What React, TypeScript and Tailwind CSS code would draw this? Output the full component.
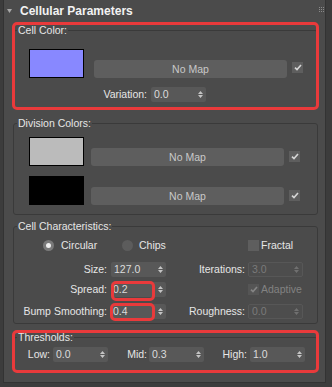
import React from "react";
import { clsx } from "clsx";

/* ── small widgets ─────────────────────────────────────────────── */

const Arrows = ({ dim }: { dim?: boolean }) => (
  <svg width="5" height="7" viewBox="0 0 5 7" className="shrink-0">
    <path d="M2.5 0L5 3H0Z M0 4H5L2.5 7Z" fill={dim ? "#707070" : "#c4c4c4"} />
  </svg>
);

function Spinner({
  value,
  disabled,
  scrolled,
}: {
  value: string;
  disabled?: boolean;
  scrolled?: boolean;
}) {
  return (
    <div
      className={clsx(
        "flex h-[15px] w-[55px] shrink-0 items-center justify-between rounded-[2px] pr-[3px] text-[10.5px] leading-none",
        scrolled ? "pl-[2px]" : "pl-[3px]",
        disabled
          ? "border border-[#575757] bg-[#4d4d4d] text-[#7a7a7a]"
          : "bg-[#585858] text-[#dcdcdc]"
      )}
    >
      <span>{value}</span>
      <Arrows dim={disabled} />
    </div>
  );
}

function Check({ checked, dim }: { checked?: boolean; dim?: boolean }) {
  return (
    <div
      className={clsx(
        "flex h-[11px] w-[11px] shrink-0 items-center justify-center",
        dim ? "bg-[#555555]" : "bg-[#5e5e5e]"
      )}
    >
      {checked && (
        <svg width="8" height="7" viewBox="0 0 8 7">
          <path
            d="M1 3.6L3 5.6L7 1"
            fill="none"
            stroke={dim ? "#858585" : "#d6d6d6"}
            strokeWidth="1.6"
          />
        </svg>
      )}
    </div>
  );
}

const NoMap = () => (
  <div className="flex h-[18px] w-[193px] shrink-0 items-center justify-center rounded-[3px] bg-[#5e5e5e] text-[10.5px] leading-none text-[#c8c8c8]">
    No Map
  </div>
);

const Swatch = ({ color }: { color: string }) => (
  <div className={clsx("h-[29px] w-[55px] shrink-0 border border-black", color)} />
);

/* red annotation frame drawn over the UI */
const Mark = ({ className }: { className: string }) => (
  <div
    className={clsx(
      "pointer-events-none absolute rounded-[5px] border-[3px] border-[#e93a3b]",
      className
    )}
  />
);

const Legend = ({ children }: { children: React.ReactNode }) => (
  <legend className="ml-[3px] px-[1px] text-[10.5px] leading-[12px] text-[#e6e6e6]">
    {children}
  </legend>
);

const Label = ({ className, children }: { className: string; children: React.ReactNode }) => (
  <div className={clsx("shrink-0 text-right text-[10.5px] leading-none text-[#e6e6e6]", className)}>
    {children}
  </div>
);

/* ── panel ─────────────────────────────────────────────────────── */

export default function App() {
  return (
    <div className="h-[387px] w-[332px] bg-[#3c3c3c] pl-[3px] font-['Liberation_Sans',Arial,sans-serif]">
      <div className="h-[383px] w-[323px] border-x border-b border-[#333333] bg-[#4b4b4b]">
        {/* header */}
        <div className="flex h-[22px] items-center pl-[3px] pr-[1px]">
          <svg width="5" height="4" viewBox="0 0 5 4">
            <path d="M0 0H5L2.5 4Z" fill="#a8a8a8" />
          </svg>
          <span className="ml-[8px] text-[12px] font-bold leading-none text-[#f2f2f2]">
            Cellular Parameters
          </span>
          <svg width="5" height="5" viewBox="0 0 5 5" className="ml-auto mb-[3px]">
            {[0, 2, 4].map((x) =>
              [0, 2, 4].map((y) => (
                <rect key={`${x}-${y}`} x={x} y={y} width="1" height="1" fill="#8a8a8a" />
              ))
            )}
          </svg>
        </div>

        <div className="pl-[9px]">
          {/* Cell Color */}
          <div className="relative mt-[2px] w-[305px]">
            <fieldset className="w-[305px] rounded-[3px] border border-[#3a3a3a] pb-[5px]">
              <Legend>Cell Color:</Legend>
              <div className="mt-[13px] ml-[15px] flex items-end">
                <Swatch color="bg-[#8888ff]" />
                <div className="ml-[10px]">
                  <NoMap />
                </div>
                <div className="mb-[5px] ml-[5px]">
                  <Check checked />
                </div>
              </div>
              <div className="mt-[9px] flex items-center">
                <Label className="w-[133px]">Variation:</Label>
                <div className="ml-[4px]">
                  <Spinner value="0.0" />
                </div>
              </div>
            </fieldset>
            <Mark className="-top-[2px] -bottom-[2px] -left-[1px] -right-[1px]" />
          </div>

          {/* Division Colors */}
          <fieldset className="mt-[9px] w-[305px] rounded-[3px] border border-[#3a3a3a] pb-[9px]">
            <Legend>Division Colors:</Legend>
            <div className="mt-[8px] ml-[15px] flex items-end">
              <Swatch color="bg-[#bbbbbb]" />
              <div className="ml-[7px]">
                <NoMap />
              </div>
              <div className="mb-[4px] ml-[5px]">
                <Check checked />
              </div>
            </div>
            <div className="mt-[10px] ml-[15px] flex items-end">
              <Swatch color="bg-black" />
              <div className="ml-[7px]">
                <NoMap />
              </div>
              <div className="mb-[4px] ml-[5px]">
                <Check checked />
              </div>
            </div>
          </fieldset>

          {/* Cell Characteristics */}
          <fieldset className="mt-[5px] w-[305px] rounded-[3px] border border-[#3a3a3a] pb-[4px]">
            <Legend>Cell Characteristics:</Legend>
            <div className="mt-[8px] ml-[29px] flex h-[11px] items-center text-[10.5px] leading-none text-[#e6e6e6]">
              <div className="flex w-[79px] items-center">
                <div className="flex h-[11px] w-[11px] items-center justify-center rounded-full bg-[#7a7a7a]">
                  <div className="h-[5px] w-[5px] rounded-full bg-[#f0f0f0]" />
                </div>
                <span className="ml-[7px]">Circular</span>
              </div>
              <div className="flex w-[126px] items-center">
                <div className="h-[11px] w-[11px] rounded-full bg-[#5c5c5c]" />
                <span className="ml-[6px]">Chips</span>
              </div>
              <Check />
              <span className="ml-[2px]">Fractal</span>
            </div>

            <div className="mt-[11px] flex items-center">
              <Label className="w-[93px]">Size:</Label>
              <div className="ml-[4px]">
                <Spinner value="127.0" />
              </div>
              <Label className="w-[79px]">Iterations:</Label>
              <div className="ml-[3px]">
                <Spinner value="3.0" disabled />
              </div>
            </div>

            <div className="mt-[5px] flex items-center">
              <Label className="w-[93px]">Spread:</Label>
              <div className="relative ml-[4px]">
                <Spinner value="0.2" scrolled />
                <Mark className="-top-[1px] -bottom-[4px] left-0 right-[11px]" />
              </div>
              <div className="ml-[82px]">
                <Check checked dim />
              </div>
              <span className="ml-[2px] text-[10.5px] leading-none text-[#828282]">Adaptive</span>
            </div>

            <div className="mt-[7px] flex items-center">
              <Label className="w-[93px]">Bump Smoothing:</Label>
              <div className="relative ml-[4px]">
                <Spinner value="0.4" scrolled />
                <Mark className="-top-[1px] -bottom-[2px] -left-[1px] right-[11px]" />
              </div>
              <Label className="w-[79px]">Roughness:</Label>
              <div className="ml-[3px]">
                <Spinner value="0.0" disabled />
              </div>
            </div>
          </fieldset>

          {/* Thresholds */}
          <div className="relative mt-[7px] w-[305px]">
            <fieldset className="w-[305px] rounded-[3px] border border-[#3a3a3a] pb-[8px]">
              <Legend>Thresholds:</Legend>
              <div className="mt-[4px] flex items-center">
                <Label className="w-[36px]">Low:</Label>
                <div className="ml-[3px]">
                  <Spinner value="0.0" />
                </div>
                <Label className="w-[39px]">Mid:</Label>
                <div className="ml-[2px]">
                  <Spinner value="0.3" />
                </div>
                <Label className="w-[43px]">High:</Label>
                <div className="ml-[3px]">
                  <Spinner value="1.0" />
                </div>
              </div>
            </fieldset>
            <Mark className="-top-[1px] -bottom-[2px] -left-[1px] -right-[1px]" />
          </div>
        </div>
      </div>
    </div>
  );
}
